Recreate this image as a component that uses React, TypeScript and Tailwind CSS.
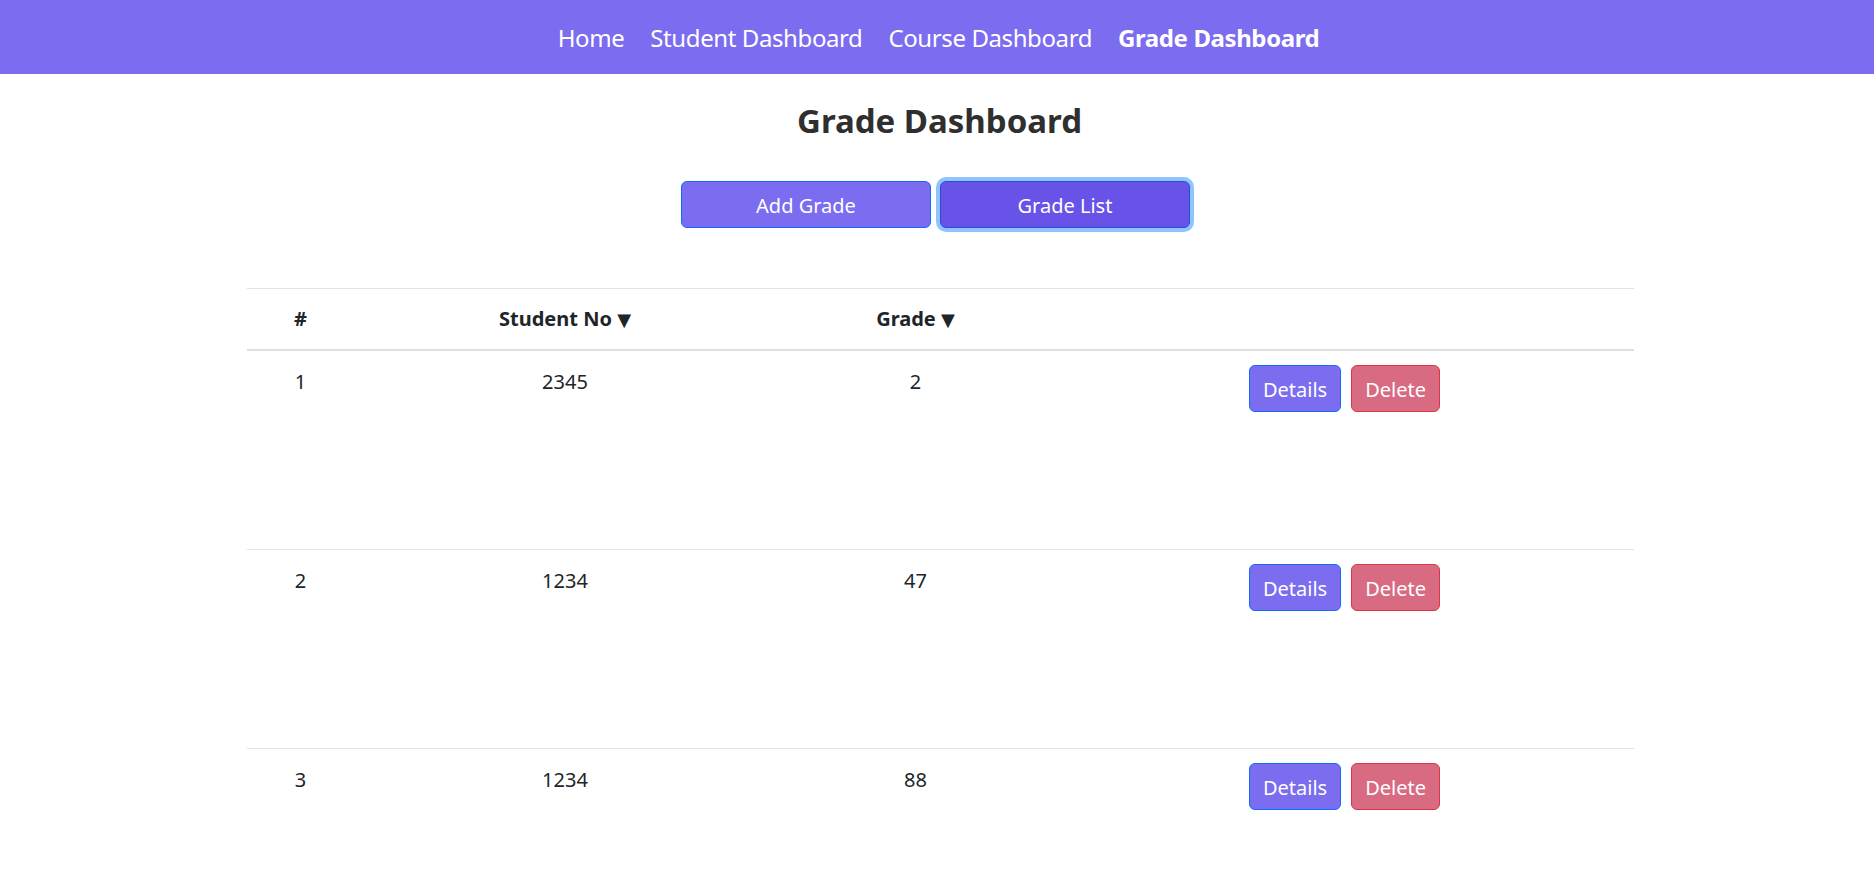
import { useState } from "react";

type Grade = { id: number; studentNo: string; grade: number };

const GRADES: Grade[] = [
  { id: 1, studentNo: "2345", grade: 2 },
  { id: 2, studentNo: "1234", grade: 47 },
  { id: 3, studentNo: "1234", grade: 88 },
];

const NAV = ["Home", "Student Dashboard", "Course Dashboard", "Grade Dashboard"];

export default function App() {
  const [tab, setTab] = useState<"add" | "list">("list");

  return (
    <div className="min-h-screen bg-white font-['Segoe_UI','Noto_Sans',sans-serif] text-[#212529]">
      {/* Navbar */}
      <nav className="h-[74px] bg-[#7b6cf0] flex items-center justify-center gap-[26px] pl-[3px] pt-[2px]">
        {NAV.map((n) => (
          <a
            key={n}
            href="#"
            className={`text-[24px] text-white tracking-[-0.4px] ${
              n === "Grade Dashboard" ? "font-bold" : ""
            }`}
          >
            {n}
          </a>
        ))}
      </nav>

      <h3 className="mt-[26px] text-center text-[33px] leading-[42px] font-bold text-[#2f2f2f] pl-[5px]">
        Grade Dashboard
      </h3>

      {/* Tabs */}
      <div className="mt-[39px] flex justify-center gap-[9px] pr-[3px]">
        <button
          onClick={() => setTab("add")}
          className={`w-[250px] h-[47px] pt-[3px] rounded-[6px] border text-[20px] text-white ${
            tab === "add"
              ? "bg-[#6753e8] border-[#2f4bd6] ring-4 ring-[#8cc6fd]"
              : "bg-[#7b6cf0] border-[#0d6efd]"
          }`}
        >
          Add Grade
        </button>
        <button
          onClick={() => setTab("list")}
          className={`w-[250px] h-[47px] pt-[3px] rounded-[6px] border text-[20px] text-white ${
            tab === "list"
              ? "bg-[#6753e8] border-[#2f4bd6] ring-4 ring-[#8cc6fd]"
              : "bg-[#7b6cf0] border-[#0d6efd]"
          }`}
        >
          Grade List
        </button>
      </div>

      {/* Table */}
      <div className="mt-[60px] mx-auto w-[1387px] translate-x-[3px] text-[20px]">
        <div className="grid grid-cols-[108px_421px_280px_1fr] h-[63px] items-center border-t border-[#e0e2e5] border-b-2 border-b-[#dcdfe3] font-bold text-center text-[#212529]">
          <div>#</div>
          <div>
            Student No <span className="font-['DejaVu_Sans',sans-serif] text-[18px]">▼</span>
          </div>
          <div>
            Grade <span className="font-['DejaVu_Sans',sans-serif] text-[18px]">▼</span>
          </div>
          <div />
        </div>

        {GRADES.map((g) => (
          <div
            key={g.id}
            className="grid grid-cols-[108px_421px_280px_1fr] h-[199px] border-b border-[#e2e2e2] text-center"
          >
            <div className="pt-[16px] leading-[30px]">{g.id}</div>
            <div className="pt-[16px] leading-[30px]">{g.studentNo}</div>
            <div className="pt-[16px] leading-[30px]">{g.grade}</div>
            <div className="pt-[14px] flex justify-center gap-[10px] items-start">
              <button className="h-[47px] pt-[3px] px-[13px] rounded-[6px] border border-[#0d6efd] bg-[#7b6cf0] text-white">
                Details
              </button>
              <button className="h-[47px] pt-[3px] px-[13px] rounded-[6px] border border-[#dc3545] bg-[#d86b82] text-white">
                Delete
              </button>
            </div>
          </div>
        ))}
      </div>
    </div>
  );
}
